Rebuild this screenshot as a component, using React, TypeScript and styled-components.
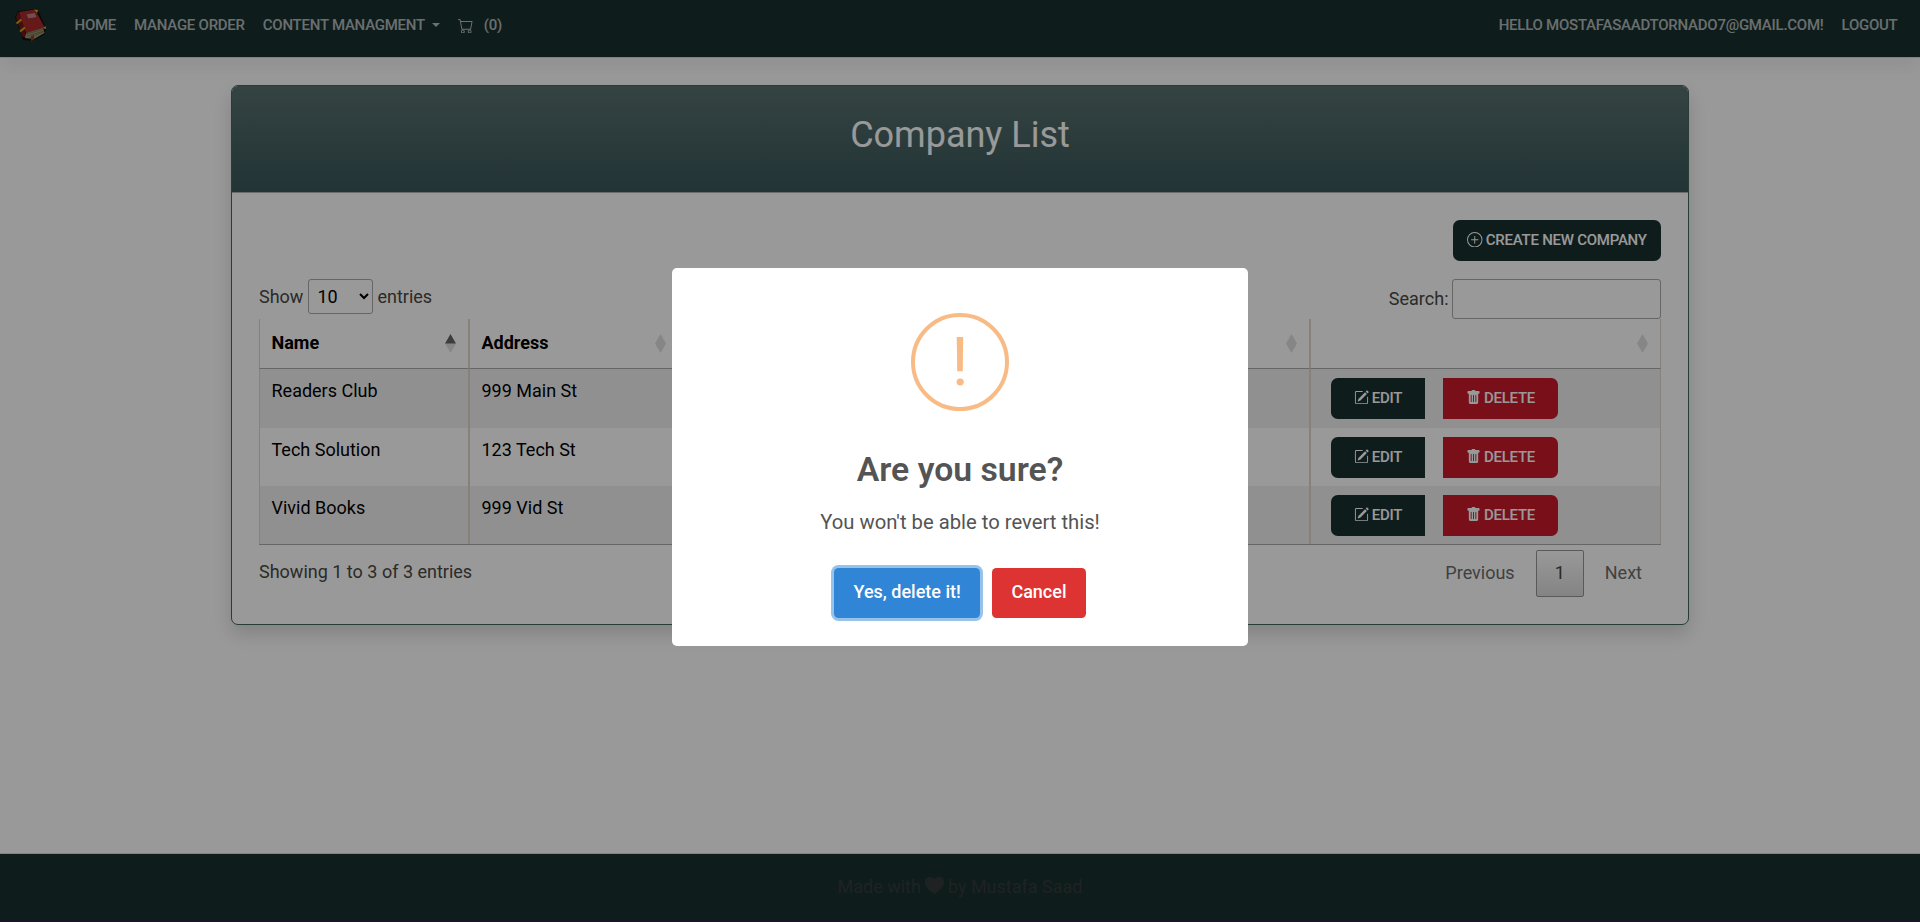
import React from 'react';
import styled, { createGlobalStyle, css } from 'styled-components';
import { BsCart, BsPlusCircle, BsPencilSquare, BsTrashFill } from 'react-icons/bs';

const PRIMARY = '#1a302f';
const DANGER = '#c91a2b';

const GlobalStyle = createGlobalStyle`
  html { font-size: 18px; }
  *, *::before, *::after { box-sizing: border-box; }
  body {
    margin: 0;
    background: #fff;
    color: #3e3f3a;
    font-family: Roboto, "Liberation Sans", sans-serif;
    font-size: 1rem;
    line-height: 1.5;
    overflow: hidden;
  }
  button, input, select { font-family: inherit; }
`;

const Page = styled.div`
  display: flex;
  flex-direction: column;
  height: 922px;
`;

const Navbar = styled.nav`
  display: flex;
  align-items: flex-start;
  height: 58px;
  flex: none;
  padding: 8px 22.5px 0 14px;
  background: ${PRIMARY};
  border-bottom: 1px solid #dfd7ca;
  box-shadow: 0 9px 18px rgba(0, 0, 0, 0.06);
`;

const Brand = styled.a`
  display: block;
  width: 34px;
  height: 35px;
  margin-right: 26.5px;
`;

const NavLinks = styled.div<{ $right?: boolean }>`
  display: flex;
  gap: 18px;
  height: 35px;
  align-items: center;
  margin-left: ${(p) => (p.$right ? 'auto' : '0')};
`;

const NavLink = styled.a`
  display: flex;
  align-items: center;
  color: rgba(255, 255, 255, 0.68);
  font-size: 15px;
  font-weight: 500;
  letter-spacing: -0.25px;
  text-transform: uppercase;
  white-space: nowrap;
`;

const Caret = styled.span`
  margin: -2px 0 0 7.5px;
  border-top: 4.5px solid;
  border-left: 4.5px solid transparent;
  border-right: 4.5px solid transparent;
`;

const CartCount = styled.span`
  margin-left: 10px;
`;

const Main = styled.main`
  flex: 1;
  padding-top: 27px;
`;

const Card = styled.section`
  width: 1458px;
  height: 540px;
  margin: 0 auto;
  border: 1px solid #45645a;
  border-radius: 7px;
  overflow: hidden;
  background: #fff;
  box-shadow: 0 9px 18px rgba(0, 0, 0, 0.15);
`;

const CardHeader = styled.header`
  height: 107px;
  padding-top: 28px;
  text-align: center;
  background: linear-gradient(#58726e, #3a565b);
  border-bottom: 1px solid #b5b5b5;
`;

const CardTitle = styled.h2`
  margin: 0;
  color: #fff;
  font-size: 2rem;
  font-weight: 400;
  line-height: 1.2;
`;

const CardBody = styled.div`
  padding: 27px;
`;

const Actions = styled.div`
  display: flex;
  justify-content: flex-end;
  margin-bottom: 18px;
`;

const Button = styled.button<{ $danger?: boolean; $group?: 'start' | 'end'; $width: number }>`
  display: inline-flex;
  align-items: center;
  justify-content: center;
  gap: 3px;
  width: ${(p) => p.$width}px;
  height: 41px;
  padding: 0 0 2px;
  border: 0;
  border-radius: 6.75px;
  color: #fff;
  background: ${(p) => (p.$danger ? DANGER : PRIMARY)};
  font-size: 15px;
  font-weight: 500;
  letter-spacing: -0.25px;
  text-transform: uppercase;
  white-space: nowrap;
  ${(p) => p.$group === 'start' && css`border-radius: 6.75px 0 0 6.75px;`}
  ${(p) => p.$group === 'end' && css`border-radius: 0 6.75px 6.75px 0;`}
`;

const Controls = styled.div`
  display: flex;
  justify-content: space-between;
  height: 40px;
`;

const LengthLabel = styled.label`
  display: flex;
  align-items: center;
  gap: 5px;
  height: 35px;
  color: #484844;
`;

const LengthSelect = styled.select`
  width: 65px;
  height: 35px;
  padding: 4px;
  margin-right: -1px;
  border: 1px solid #aaa;
  border-radius: 3px;
  background: transparent;
  color: #000;
  font-size: 18px;
`;

const SearchLabel = styled.label`
  display: flex;
  align-items: flex-start;
  gap: 3.5px;
  height: 40px;
  color: #484844;
  line-height: 39px;
`;

const SearchInput = styled.input`
  width: 209px;
  height: 40px;
  border: 1px solid #aaa;
  border-radius: 3px;
  background: transparent;
`;

const Table = styled.div`
  border-bottom: 1px solid #aaa;
`;

const Row = styled.div<{ $odd?: boolean; $head?: boolean }>`
  display: grid;
  grid-template-columns: 210px 210px 210px 211px 210px 351px;
  height: ${(p) => (p.$head ? '50px' : '58px')};
  color: #000;
  background: ${(p) => (p.$odd ? '#f1f1f1' : '#fff')};
  font-weight: ${(p) => (p.$head ? 700 : 400)};
  &:nth-child(2) { height: 59px; }
`;

const Cell = styled.div<{ $head?: boolean }>`
  display: flex;
  justify-content: space-between;
  align-items: flex-start;
  padding: ${(p) => (p.$head ? '10px 12px 0 11.5px' : '8px 11px 0 11.5px')};
  border-left: 1px solid #dfd7ca;
  border-right: 1px solid #dfd7ca;
  ${(p) => p.$head && css`border-bottom: 1px solid #aaa;`}
`;

const SortIcon = styled.svg`
  width: 11px;
  height: 19px;
  margin-top: 5px;
  margin-left: auto;
`;

const ButtonGroup = styled.div`
  display: flex;
  gap: 18px;
  margin: 1px 0 0 8.5px;
`;

const TableFooter = styled.div`
  display: flex;
  justify-content: space-between;
  padding-top: 4.5px;
  color: #484844;
`;

const Info = styled.div`
  padding-top: 8px;
`;

const Pager = styled.div`
  display: flex;
  gap: 2px;
`;

const PageButton = styled.a<{ $current?: boolean }>`
  min-width: 27px;
  height: 47px;
  padding: 8px 18px;
  border: 1px solid ${(p) => (p.$current ? '#979797' : 'transparent')};
  border-radius: 2px;
  color: ${(p) => (p.$current ? '#484844' : '#6c6c6c')};
  background: ${(p) => (p.$current ? 'linear-gradient(#fff, #dcdcdc)' : 'none')};
`;

const Footer = styled.footer`
  display: flex;
  justify-content: center;
  height: 69px;
  flex: none;
  padding-top: 19px;
  border-top: 1px solid #dfd7ca;
  border-bottom: 2px solid #292440;
  background: ${PRIMARY};
  color: #343a3a;
`;

const FooterText = styled.span`
  display: flex;
  align-items: flex-start;
  gap: 4px;
`;

const HeartIcon = styled.svg`
  width: 19px;
  height: 17px;
  margin-top: 4px;
`;

const Backdrop = styled.div`
  position: fixed;
  inset: 0;
  display: flex;
  justify-content: center;
  padding-top: 268px;
  background: rgba(0, 0, 0, 0.4);
`;

const Dialog = styled.div`
  display: flex;
  flex-direction: column;
  align-items: center;
  width: 576px;
  height: 378px;
  border-radius: 5px;
  background: #fff;
  color: #545454;
`;

const WarningIcon = styled.div`
  display: flex;
  align-items: center;
  justify-content: center;
  flex: none;
  width: 98px;
  height: 98px;
  margin-top: 45px;
  border: 4px solid #f8bb86;
  border-radius: 50%;
  color: #f8bb86;
  font-size: 67.5px;
  line-height: 1;
`;

const DialogTitle = styled.h2`
  margin: 0;
  padding-top: 39px;
  font-size: 33.75px;
  font-weight: 600;
  line-height: 1.2;
`;

const DialogText = styled.div`
  margin-top: 19px;
  font-size: 20.25px;
  line-height: 24px;
`;

const DialogActions = styled.div`
  display: flex;
  gap: 12px;
  margin-top: 34px;
`;

const DialogButton = styled.button<{ $color: string; $focused?: boolean }>`
  height: 50px;
  padding: 0 19.3px 2px;
  border: 0;
  border-radius: 4.5px;
  color: #fff;
  background: ${(p) => p.$color};
  font-size: 18px;
  font-weight: 500;
  ${(p) => p.$focused && css`box-shadow: 0 0 0 3px rgba(48, 133, 214, 0.5);`}
`;

const companies = [
  { name: 'Readers Club', address: '999 Main St' },
  { name: 'Tech Solution', address: '123 Tech St' },
  { name: 'Vivid Books', address: '999 Vid St' },
];

const columns = ['Name', 'Address', '', '', '', ''];

function BookLogo() {
  return (
    <svg width="34" height="35" viewBox="0 0 34 35">
      <path d="M1 9 4 3 22 1 25 4 32 20 31 26 19 33 9 32Z" fill="#14100f" />
      <path d="M2 9 4 4 9 12 12 30 8 28Z" fill="#751719" />
      <path d="M5 4 21 1.5 31 20 12 25Z" fill="#a82a29" />
      <path d="m12 25 17-5 1.5 5-10.500 6-9-1Z" fill="#9e9672" />
      <path d="m12 26 18-5M13 28l17-5M15 30l14-6" stroke="#665f48" strokeWidth=".7" />
      <path d="m2.500 15.500 5-4M6 23.500l5-4" stroke="#caa317" strokeWidth="2.200" />
      <path d="m20 1.500 4 .500-1 3ZM29 20l2.500-2 .5 3Z" fill="#dcb51c" />
      <path d="m12 6 9-1.500 2 5-9 1.500Z" fill="#c77f83" stroke="#832528" strokeWidth=".7" />
      <path d="m17 28 3-1v6l-2-1-1 2Z" fill="#854325" />
    </svg>
  );
}

function Heart() {
  return (
    <HeartIcon viewBox="0 0 19 17">
      <path
        d="M9.500 2.200C8.300.700 6.800 0 5 0 2 0 0 2.200 0 5.200 0 9.500 4.200 13.500 9.500 17 14.800 13.500 19 9.500 19 5.200 19 2.200 17 0 14 0c-1.800 0-3.300.7-4.500 2.200Z"
        fill="currentColor"
      />
    </HeartIcon>
  );
}

function Sort({ active }: { active?: boolean }) {
  return (
    <SortIcon viewBox="0 0 11 19">
      <path d="M5.500 0 11 9.500H0Z" fill="#000" opacity={active ? 0.6 : 0.125} />
      <path d="M0 9.500h11L5.500 19Z" fill="#000" opacity="0.125" />
    </SortIcon>
  );
}

export default function App() {
  return (
    <>
      <GlobalStyle />
      <Page>
        <Navbar>
          <Brand><BookLogo /></Brand>
          <NavLinks>
            <NavLink>Home</NavLink>
            <NavLink>Manage Order</NavLink>
            <NavLink>Content Managment<Caret /></NavLink>
            <NavLink><BsCart size={15.5} /><CartCount>(0)</CartCount></NavLink>
          </NavLinks>
          <NavLinks $right>
            <NavLink>Hello mostafasaadtornado7@gmail.com!</NavLink>
            <NavLink>Logout</NavLink>
          </NavLinks>
        </Navbar>
        <Main>
          <Card>
            <CardHeader><CardTitle>Company List</CardTitle></CardHeader>
            <CardBody>
              <Actions>
                <Button $width={208}><BsPlusCircle size={15.5} />Create New Company</Button>
              </Actions>
              <Controls>
                <LengthLabel>
                  Show
                  <LengthSelect defaultValue="10"><option>10</option></LengthSelect>
                  entries
                </LengthLabel>
                <SearchLabel>Search:<SearchInput type="search" /></SearchLabel>
              </Controls>
              <Table>
                <Row $head>
                  {columns.map((label, i) => (
                    <Cell $head key={i}>{label}<Sort active={i === 0} /></Cell>
                  ))}
                </Row>
                {companies.map((company, i) => (
                  <Row key={company.name} $odd={i % 2 === 0}>
                    <Cell>{company.name}</Cell>
                    <Cell>{company.address}</Cell>
                    <Cell />
                    <Cell />
                    <Cell />
                    <Cell>
                      <ButtonGroup>
                        <Button $group="start" $width={94}><BsPencilSquare size={15} />Edit</Button>
                        <Button $group="end" $danger $width={115}><BsTrashFill size={15} />Delete</Button>
                      </ButtonGroup>
                    </Cell>
                  </Row>
                ))}
              </Table>
              <TableFooter>
                <Info>Showing 1 to 3 of 3 entries</Info>
                <Pager>
                  <PageButton>Previous</PageButton>
                  <PageButton $current>1</PageButton>
                  <PageButton>Next</PageButton>
                </Pager>
              </TableFooter>
            </CardBody>
          </Card>
        </Main>
        <Footer>
          <FooterText>Made with <Heart /> by Mustafa Saad</FooterText>
        </Footer>
      </Page>
      <Backdrop>
        <Dialog role="dialog">
          <WarningIcon>!</WarningIcon>
          <DialogTitle>Are you sure?</DialogTitle>
          <DialogText>You won't be able to revert this!</DialogText>
          <DialogActions>
            <DialogButton $color="#3085d6" $focused>Yes, delete it!</DialogButton>
            <DialogButton $color="#dd3333">Cancel</DialogButton>
          </DialogActions>
        </Dialog>
      </Backdrop>
    </>
  );
}
